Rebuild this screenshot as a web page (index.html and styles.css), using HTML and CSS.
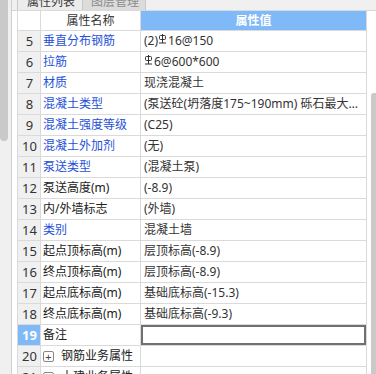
FILE: index.html
```html
<!DOCTYPE html>
<html lang="zh-CN">
<head>
  <meta charset="UTF-8" />
  <title>属性列表</title>
  <link rel="stylesheet" href="styles.css">
</head>
<body>
  <div class="side">
    <div class="side-thumb"></div>
  </div>

  <div class="main">
    <div class="tabs">
      <div class="tab active">属性列表</div>
      <div class="tab">图层管理</div>
    </div>

    <div class="content">
      <div class="grid-wrap">
        <table class="props">
          <colgroup>
            <col class="c-no">
            <col class="c-name">
            <col class="c-val">
          </colgroup>
          <thead>
            <tr>
              <th></th>
              <th class="h-name">属性名称</th>
              <th class="h-val">属性值</th>
            </tr>
          </thead>
          <tbody>
            <tr><td class="no">5</td><td class="name link">垂直分布钢筋</td><td class="val">(2)<svg class="bar" viewBox="0 0 9 10" width="9" height="10"><rect x="1.5" y="1.5" width="6" height="4" rx="1" /><path d="M4.5 0v9M1 9h7" /></svg>16@150</td></tr>
            <tr><td class="no">6</td><td class="name link">拉筋</td><td class="val"><svg class="bar" viewBox="0 0 9 10" width="9" height="10"><rect x="1.5" y="1.5" width="6" height="4" rx="1" /><path d="M4.5 0v9M1 9h7" /></svg>6@600*600</td></tr>
            <tr><td class="no">7</td><td class="name link">材质</td><td class="val">现浇混凝土</td></tr>
            <tr><td class="no">8</td><td class="name link">混凝土类型</td><td class="val">(泵送砼(坍落度175~190mm) 砾石最大粒径40mm)</td></tr>
            <tr><td class="no">9</td><td class="name link">混凝土强度等级</td><td class="val">(C25)</td></tr>
            <tr><td class="no">10</td><td class="name link">混凝土外加剂</td><td class="val">(无)</td></tr>
            <tr><td class="no">11</td><td class="name link">泵送类型</td><td class="val">(混凝土泵)</td></tr>
            <tr><td class="no">12</td><td class="name">泵送高度(m)</td><td class="val">(-8.9)</td></tr>
            <tr><td class="no">13</td><td class="name">内/外墙标志</td><td class="val">(外墙)</td></tr>
            <tr><td class="no">14</td><td class="name link">类别</td><td class="val">混凝土墙</td></tr>
            <tr><td class="no">15</td><td class="name">起点顶标高(m)</td><td class="val">层顶标高(-8.9)</td></tr>
            <tr><td class="no">16</td><td class="name">终点顶标高(m)</td><td class="val">层顶标高(-8.9)</td></tr>
            <tr><td class="no">17</td><td class="name">起点底标高(m)</td><td class="val">基础底标高(-15.3)</td></tr>
            <tr><td class="no">18</td><td class="name">终点底标高(m)</td><td class="val">基础底标高(-9.3)</td></tr>
            <tr class="current"><td class="no">19</td><td class="name">备注</td><td class="val editing"></td></tr>
            <tr><td class="no">20</td><td class="name"><span class="expand">+</span>钢筋业务属性</td><td class="val"></td></tr>
            <tr><td class="no">21</td><td class="name"><span class="expand">+</span>土建业务属性</td><td class="val"></td></tr>
          </tbody>
        </table>
      </div>
      <div class="rscroll">
        <div class="rscroll-thumb"></div>
      </div>
    </div>
  </div>
</body>
</html>
```

FILE: styles.css
```css
* {
  box-sizing: border-box;
  margin: 0;
  padding: 0;
}

body {
  font-family: "Noto Sans", "Noto Sans CJK SC", sans-serif;
  font-size: 12px;
  color: #222;
  background: #fff;
  display: flex;
  height: 374px;
  overflow: hidden;
}

/* left panel scrollbar */
.side {
  width: 12px;
  flex: none;
  background: #f0f0f0;
  border-right: 1px solid #cfcfcf;
}

.side-thumb {
  width: 8px;
  height: 141px;
  background: #c9c9c9;
  border-radius: 0 0 4px 4px;
}

.main {
  flex: 1;
  display: flex;
  flex-direction: column;
  min-width: 0;
}

/* tabs, only their lower part is visible */
.tabs {
  height: 11px;
  flex: none;
  display: flex;
  padding-left: 5px;
  background: #f0f0f0;
  border-bottom: 1px solid #d6d6d6;
  overflow: hidden;
}

.tab {
  height: 20px;
  margin-top: -9px;
  line-height: 20px;
  padding: 0 8px;
  background: #dcdcdc;
  color: #8c8c8c;
  border: 1px solid #c8c8c8;
  font-size: 12px;
  white-space: nowrap;
}

.tab.active {
  width: 66px;
  padding-left: 9px;
  background: #ececec;
  color: #3a3a3a;
}

.tab + .tab {
  margin-left: -1px;
  width: 64px;
}

.content {
  flex: 1;
  display: flex;
}

.grid-wrap {
  padding-left: 5px;
}

.props {
  table-layout: fixed;
  width: 350px;
  border-collapse: separate;
  border-spacing: 1px;
  background: #dadada;
  margin-top: -1px;
}

.c-no { width: 22px; }
.c-name { width: 99px; }
.c-val { width: 225px; }

th,
td {
  background: #fff;
  height: 20px;
  line-height: 20px;
  font-weight: normal;
  white-space: nowrap;
  overflow: hidden;
  text-overflow: ellipsis;
}

thead th {
  height: 19px;
  line-height: 19px;
}

.h-name {
  color: #333;
  text-align: center;
}

.h-val {
  background: #80b9f7;
  color: #fff;
  font-weight: 600;
  text-align: center;
}

td.no {
  background: #f0f0f0;
  color: #333;
  font-size: 13px;
  text-align: center;
  padding-left: 1px;
}

td.name {
  padding-left: 2px;
}

td.name.link {
  color: #1f50d8;
}

td.val {
  padding-left: 3px;
  color: #333;
}

.bar {
  vertical-align: 1px;
  margin: 0 1px 0 0;
  fill: none;
  stroke: #333;
  stroke-width: 1;
}

.current td.no {
  background: #80b9f7;
  color: #fff;
  font-weight: bold;
}

td.editing {
  box-shadow: inset 0 0 0 2px #707070;
}

.expand {
  display: inline-block;
  width: 11px;
  height: 11px;
  line-height: 9px;
  margin-right: 7px;
  border: 1px solid #888;
  border-radius: 2px;
  text-align: center;
  font-size: 11px;
  color: #444;
  vertical-align: -1px;
}

.rscroll {
  flex: 1;
  display: flex;
  justify-content: flex-end;
  padding-top: 82px;
}

.rscroll-thumb {
  width: 5px;
  height: 300px;
  background: #c9c9c9;
  border-radius: 3px 0 0 0;
}
```
